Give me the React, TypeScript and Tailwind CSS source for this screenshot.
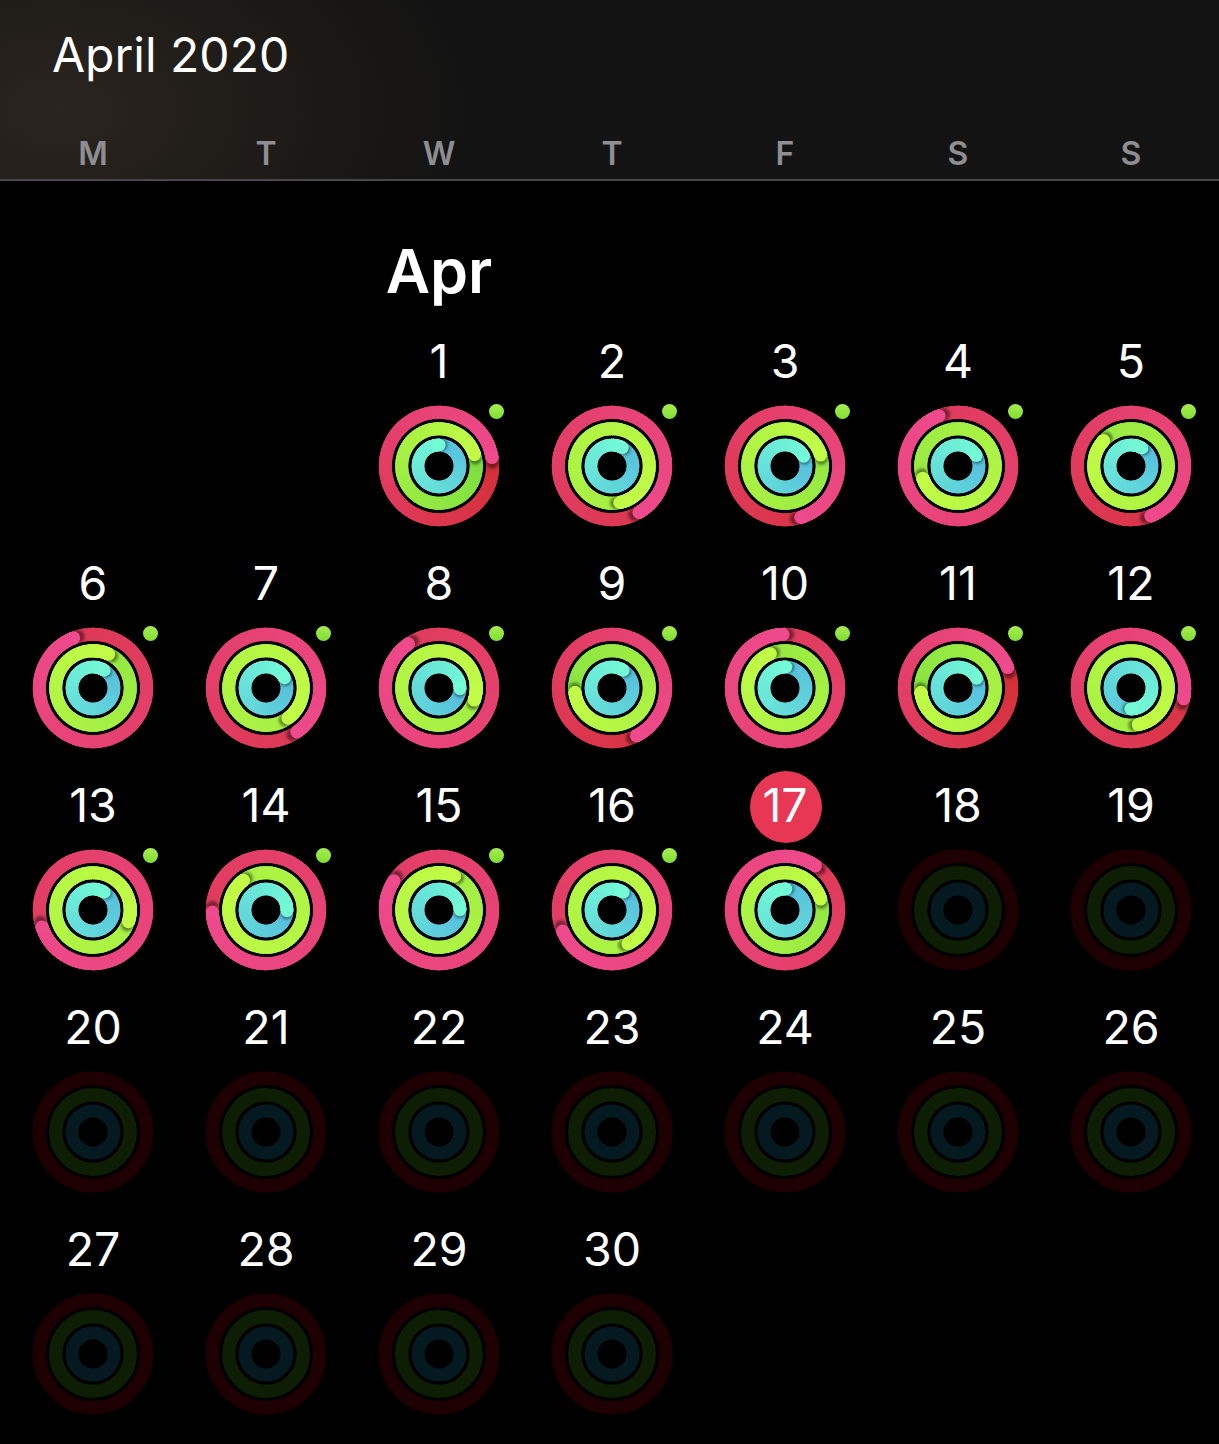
type RGB = [number, number, number];
type RingColors = { from: RGB; to: RGB };

const RED: RingColors = { from: [212, 47, 54], to: [238, 74, 140] };
const GREEN: RingColors = { from: [122, 222, 64], to: [194, 252, 70] };
const BLUE: RingColors = { from: [84, 186, 222], to: [116, 251, 214] };

// day: red end, green end, blue end (degrees clockwise from 12 o'clock), red start tint, green start tint
const DONE: Record<number, [number, number, number, number, number]> = {
  1: [81, 72.5, 1, 0, 0],
  2: [150, 168, 30, 0.3, 0.6],
  3: [163, 73, 63, 0.2, 0.35],
  4: [339.5, 251, 61, 0.45, 0.4],
  5: [158.5, 313, 32, 0.2, 0.4],
  6: [339, 25, 33, 0.35, 0.35],
  7: [145, 144, 62, 0.35, 0.6],
  8: [325.5, 109, 93, 0.45, 0.55],
  9: [153, 263.5, 33, 0.15, 0.2],
  10: [358, 337, 3, 0.45, 0.4],
  11: [67.7, 263.5, 63, 0, 0.2],
  12: [101.7, 169, 181, 0.15, 0.6],
  13: [251.7, 108.4, 33, 0.5, 0.65],
  14: [268, 323, 93, 0.45, 0.65],
  15: [303, 25, 90, 0.55, 0.55],
  16: [247, 155, 33, 0.5, 0.65],
  17: [34.7, 73, 3, 0.4, 0.35],
};

function point(r: number, deg: number) {
  const a = (deg * Math.PI) / 180;
  return [r * Math.sin(a), -r * Math.cos(a)];
}

function arc(r: number, a: number, b: number) {
  const [x1, y1] = point(r, a);
  const [x2, y2] = point(r, b);
  return `M${x1.toFixed(3)} ${y1.toFixed(3)}A${r} ${r} 0 0 1 ${x2.toFixed(3)} ${y2.toFixed(3)}`;
}

function Ring({ r, w, end, start, colors, id }: { r: number; w: number; end: number; start: number; colors: RingColors; id: string }) {
  const N = 90;
  const colorAt = (f: number) => {
    const s = start + (1 - start) * f;
    const c = colors.from.map((v, i) => Math.round(v + (colors.to[i] - v) * s));
    return `rgb(${c[0]},${c[1]},${c[2]})`;
  };
  const segs = [];
  for (let i = 0; i < N; i++) {
    const a = end + (i / N) * 360;
    // each piece runs on under the next one, so no seam shows between them
    segs.push({ a, b: a + 360 / N + (i === N - 1 ? 0 : 6), color: colorAt((i + 0.5) / N), i });
  }
  const [cx, cy] = point(r, end);
  const [sx, sy] = point(r, end + 5);
  const inner = r - w / 2;
  const outer = r + w / 2;
  const over = segs.slice(N - 8);
  return (
    <g>
      <clipPath id={id}>
        <path
          clipRule="evenodd"
          d={`M${-outer} 0A${outer} ${outer} 0 1 1 ${outer} 0A${outer} ${outer} 0 1 1 ${-outer} 0ZM${-inner} 0A${inner} ${inner} 0 1 1 ${inner} 0A${inner} ${inner} 0 1 1 ${-inner} 0Z`}
        />
      </clipPath>
      {segs.map((s) => (
        <path key={s.i} d={arc(r, s.a, s.b)} fill="none" stroke={s.color} strokeWidth={w} />
      ))}
      <g clipPath={`url(#${id})`}>
        <circle cx={sx} cy={sy} r={w / 2} fill="#000" opacity={0.45} filter="url(#ringblur)" />
      </g>
      {over.map((s) => (
        <path key={s.i} d={arc(r, s.a, s.b)} fill="none" stroke={s.color} strokeWidth={w} />
      ))}
      <circle cx={cx} cy={cy} r={w / 2} fill={colorAt(1)} />
    </g>
  );
}

function Rings({ day }: { day: number }) {
  const done = DONE[day];
  if (!done) {
    return (
      <svg width="122" height="122" viewBox="-61 -61 122 122" className="block">
        <circle r="53.7" fill="none" stroke="#1f0002" strokeWidth="13.4" />
        <circle r="37.3" fill="none" stroke="#0e1e05" strokeWidth="13.4" />
        <circle r="21" fill="none" stroke="#041a20" strokeWidth="13" />
      </svg>
    );
  }
  return (
    <svg width="122" height="122" viewBox="-61 -61 122 122" className="block">
      <Ring r={53.7} w={12.9} end={done[0]} start={done[3]} colors={RED} id={`r${day}`} />
      <Ring r={37.3} w={12.9} end={done[1]} start={done[4]} colors={GREEN} id={`g${day}`} />
      <Ring r={21} w={12.5} end={done[2]} start={day === 12 ? 0.2 : 0.05} colors={BLUE} id={`b${day}`} />
    </svg>
  );
}

function Day({ day }: { day: number }) {
  const today = day === 17;
  return (
    <div className="flex h-[222px] flex-col items-center">
      <div className="relative flex h-[56px] w-full items-center justify-center">
        {today && <div className="absolute top-[-6px] left-1/2 ml-[-35.5px] h-[72px] w-[72px] rounded-full bg-[#e73755]" />}
        <span className="relative text-[46.5px] leading-[56px] font-normal text-white">{day}</span>
      </div>
      <div className="relative mt-[16px] h-[122px] w-[122px]">
        <Rings day={day} />
        {day < 17 && (
          <div className="absolute top-[-1.5px] left-[111px] h-[15px] w-[15px] rounded-full bg-linear-to-b from-[#a8ec50] to-[#7edf30]" />
        )}
      </div>
    </div>
  );
}

export default function App() {
  const days = Array.from({ length: 30 }, (_, i) => i + 1);
  const labels = ["M", "T", "W", "T", "F", "S", "S"];
  return (
    <div className="min-h-[1444px] w-[1219px] overflow-hidden bg-black font-['Inter',sans-serif]">
      <svg width="0" height="0" className="absolute">
        <defs>
          <filter id="ringblur" x="-50%" y="-50%" width="200%" height="200%">
            <feGaussianBlur stdDeviation="1.6" />
          </filter>
        </defs>
      </svg>
      <header className="h-[181px] border-b-2 border-[#48484a] bg-[#131313] bg-[radial-gradient(ellipse_420px_260px_at_60px_110px,#2b2520_0%,#1e1b18_50%,#131313_100%)]">
        <h1 className="pt-[23px] pl-[52px] text-[48px] leading-[64px] font-normal text-white">April 2020</h1>
        <div className="mt-[47px] ml-[6.5px] grid w-[1211px] grid-cols-7">
          {labels.map((l, i) => (
            <div key={i} className="text-center text-[32px] leading-[40px] font-semibold text-[#8e8e93]">
              {l}
            </div>
          ))}
        </div>
      </header>
      <main className="ml-[6.5px] w-[1211px]">
        <div className="grid h-[152px] grid-cols-7">
          <div className="col-start-3 pt-[54px] text-center text-[61px] leading-[72px] font-semibold text-white">Apr</div>
        </div>
        <div className="grid grid-cols-7">
          <div className="col-span-2" />
          {days.map((d) => (
            <Day key={d} day={d} />
          ))}
        </div>
      </main>
    </div>
  );
}
